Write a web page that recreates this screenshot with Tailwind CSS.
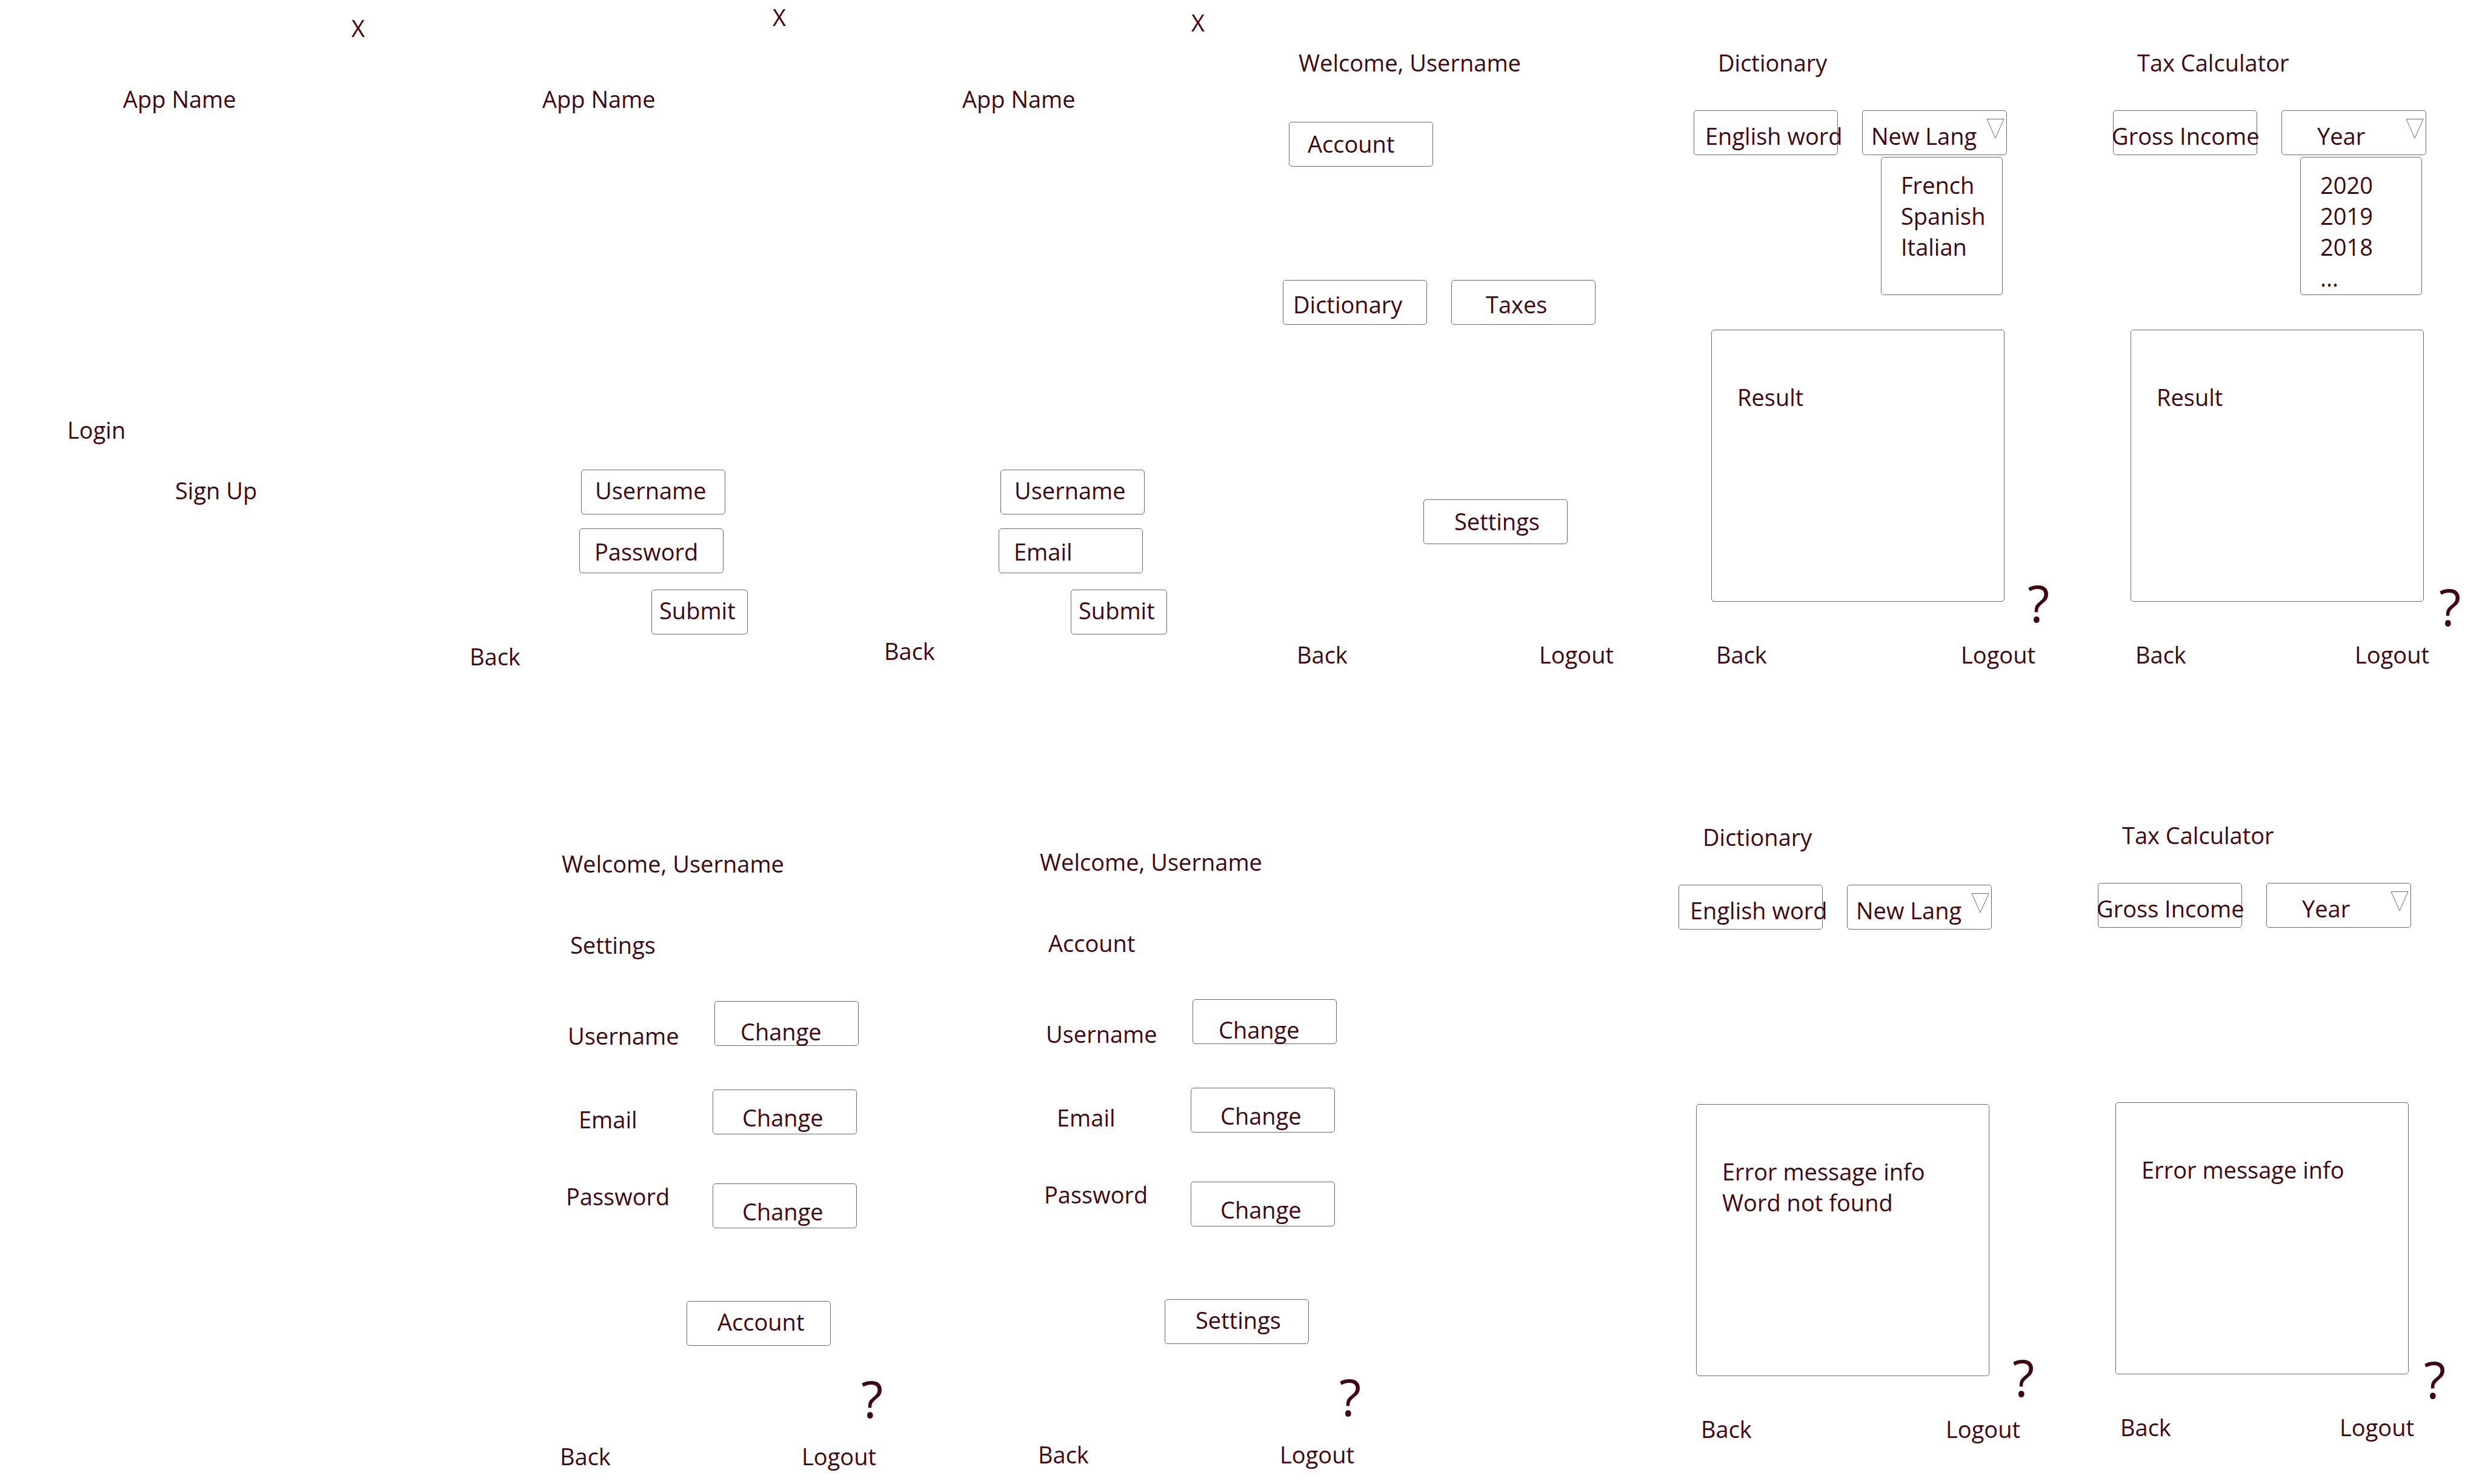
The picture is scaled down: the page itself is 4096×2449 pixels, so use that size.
<!DOCTYPE html>
<html lang="en">
<head>
<meta charset="utf-8">
<title>App wireframes</title>
<script src="https://cdn.jsdelivr.net/npm/@tailwindcss/browser@4"></script>
</head>
<body class="bg-white font-['Open_Sans',sans-serif] text-[38px] leading-[51px] text-[#3f0711]">
<main class="flex flex-col gap-[166px]">

  <div class="grid grid-cols-[692fr_692fr_692fr_692fr_692fr_636fr] items-start">

    <!-- Start screen -->
    <section class="flex flex-col items-start">
      <button class="mt-[21px] ml-[580px]">X</button>
      <h1 class="mt-[66px] ml-[203px]">App Name</h1>
      <a href="#login" class="mt-[495px] ml-[111px]">Login</a>
      <a href="#signup" class="mt-[49px] ml-[289px]">Sign Up</a>
    </section>

    <!-- Login -->
    <section class="flex flex-col items-start">
      <button class="mt-[3px] ml-[583px]">X</button>
      <h1 class="mt-[84px] ml-[203px]">App Name</h1>
      <label class="mt-[586px] ml-[267px] flex h-[74px] w-[238px] items-start rounded-[5px] border border-[#6a6a6a] pt-2 pl-5.5"><input type="text" aria-label="Username" value="Username" class="h-[51px] w-full"></label>
      <label class="mt-[23px] ml-[264px] flex h-[74px] w-[238px] items-start rounded-[5px] border border-[#6a6a6a] pt-3 pl-6"><input type="text" aria-label="Password" value="Password" class="h-[51px] w-full"></label>
      <button class="mt-[27px] ml-[383px] flex h-[74px] w-[159px] items-start rounded-[5px] border border-[#6a6a6a] pt-2 pl-3">Submit</button>
      <a href="#start" class="mt-[11px] ml-[83px]">Back</a>
    </section>

    <!-- Sign up -->
    <section class="flex flex-col items-start">
      <button class="mt-[12px] ml-[582px]">X</button>
      <h1 class="mt-[75px] ml-[204px]">App Name</h1>
      <label class="mt-[586px] ml-[267px] flex h-[74px] w-[238px] items-start rounded-[5px] border border-[#6a6a6a] pt-2 pl-5.5"><input type="text" aria-label="Username" value="Username" class="h-[51px] w-full"></label>
      <label class="mt-[23px] ml-[264px] flex h-[74px] w-[238px] items-start rounded-[5px] border border-[#6a6a6a] pt-3 pl-6"><input type="text" aria-label="Email" value="Email" class="h-[51px] w-full"></label>
      <button class="mt-[27px] ml-[383px] flex h-[74px] w-[159px] items-start rounded-[5px] border border-[#6a6a6a] pt-2 pl-3">Submit</button>
      <a href="#start" class="mt-[2px] ml-[75px]">Back</a>
    </section>

    <!-- Home -->
    <section class="flex flex-col items-start">
      <h1 class="mt-[78px] ml-[67px]">Welcome, Username</h1>
      <button class="mt-[72px] ml-[51px] flex h-[74px] w-[238px] items-start rounded-[5px] border border-[#6a6a6a] pt-2.5 pl-7.5">Account</button>
      <div class="mt-[187px] ml-[41px] flex gap-10">
        <button class="flex h-[74px] w-[238px] items-start rounded-[5px] border border-[#6a6a6a] pt-3.5 pl-4">Dictionary</button>
        <button class="flex h-[74px] w-[238px] items-start rounded-[5px] border border-[#6a6a6a] pt-3.5 pl-14">Taxes</button>
      </div>
      <button class="mt-[288px] ml-[273px] flex h-[74px] w-[238px] items-start rounded-[5px] border border-[#6a6a6a] pt-2.5 pl-12.5">Settings</button>
      <nav class="mt-[157px] ml-[64px] flex w-[523px] justify-between"><a href="#back">Back</a><a href="#logout">Logout</a></nav>
    </section>

    <!-- Dictionary -->
    <section class="flex flex-col items-start">
      <h1 class="mt-[78px] ml-[67px]">Dictionary</h1>
      <div class="mt-[53px] ml-[27px] flex gap-10">
        <label class="flex h-[74px] w-[238px] items-start rounded-[5px] border border-[#6a6a6a] pt-4 pl-4.5"><input type="text" aria-label="English word" value="English word" class="h-[51px] w-[240px] shrink-0"></label>
        <div class="relative h-[74px] w-[239px]">
          <select aria-label="New language" class="h-[74px] w-full appearance-none rounded-[5px] border border-[#6a6a6a] pt-4 pb-[5px] pl-3.5"><option>New Lang</option></select>
          <svg class="pointer-events-none absolute top-3.5 right-1 h-[33px] w-[30px]" viewBox="0 0 30 33" fill="none" stroke="#6a6a6a"><path d="M1 .5H29L15 32Z"/></svg>
        </div>
      </div>
      <ul class="mt-[3px] ml-[336px] h-[228px] w-[201px] rounded-[5px] border border-[#6a6a6a] pt-5 pl-8"><li>French</li><li>Spanish</li><li>Italian</li></ul>
      <div class="mt-[57px] ml-[56px] flex items-end gap-[38px]">
        <output class="block h-[449px] w-[484px] rounded-[5px] border border-[#6a6a6a] pt-[85px] pl-10.5">Result</output>
        <button class="-mb-[44px] text-[84px] leading-[84px]">?</button>
      </div>
      <nav class="mt-[62px] ml-[64px] flex w-[527px] justify-between"><a href="#back">Back</a><a href="#logout">Logout</a></nav>
    </section>

    <!-- Tax calculator -->
    <section class="flex flex-col items-start">
      <h1 class="mt-[78px] ml-[67px]">Tax Calculator</h1>
      <div class="mt-[53px] ml-[27px] flex gap-10">
        <label class="flex h-[74px] w-[238px] items-start rounded-[5px] border border-[#6a6a6a] pt-4"><input type="text" aria-label="Gross income" value="Gross Income" class="-ml-[3px] h-[51px] w-[260px] shrink-0"></label>
        <div class="relative h-[74px] w-[239px]">
          <select aria-label="Year" class="h-[74px] w-full appearance-none rounded-[5px] border border-[#6a6a6a] pt-4 pb-[5px] pl-14.5"><option>Year</option></select>
          <svg class="pointer-events-none absolute top-3.5 right-1 h-[33px] w-[30px]" viewBox="0 0 30 33" fill="none" stroke="#6a6a6a"><path d="M1 .5H29L15 32Z"/></svg>
        </div>
      </div>
      <ul class="mt-[3px] ml-[336px] h-[228px] w-[201px] rounded-[5px] border border-[#6a6a6a] pt-5 pl-8"><li>2020</li><li>2019</li><li>2018</li><li>...</li></ul>
      <div class="mt-[57px] ml-[56px] flex items-end gap-[25px]">
        <output class="block h-[449px] w-[484px] shrink-0 rounded-[5px] border border-[#6a6a6a] pt-[85px] pl-10.5">Result</output>
        <button class="-mb-[50px] text-[84px] leading-[84px]">?</button>
      </div>
      <nav class="mt-[62px] ml-[64px] flex w-[485px] justify-between"><a href="#back">Back</a><a href="#logout">Logout</a></nav>
    </section>
  </div>

  <div class="grid grid-cols-[861fr_789fr_1093fr_692fr_661fr] items-start">

    <!-- Settings -->
    <section class="col-start-2 flex flex-col items-start">
      <h1 class="mt-[125px] ml-[66px]">Welcome, Username</h1>
      <h2 class="mt-[83px] ml-[80px]">Settings</h2>
      <div class="mt-[67px] ml-[76px] flex items-start">
        <span class="mt-8 w-[242px]">Username</span>
        <button class="flex h-[74px] w-[238px] items-start rounded-[5px] border border-[#6a6a6a] pt-6 pl-10.5">Change</button>
      </div>
      <div class="mt-[63px] ml-[94px] flex items-start">
        <span class="mt-6 w-[221px]">Email</span>
        <button class="flex h-[74px] w-[238px] items-start rounded-[5px] border border-[#6a6a6a] pt-5 pl-12">Change</button>
      </div>
      <div class="mt-[80px] ml-[73px] flex items-start">
        <span class="-mt-1 w-[242px]">Password</span>
        <button class="flex h-[74px] w-[238px] items-start rounded-[5px] border border-[#6a6a6a] pt-5 pl-12">Change</button>
      </div>
      <button class="mt-[120px] ml-[272px] flex h-[74px] w-[238px] items-start rounded-[5px] border border-[#6a6a6a] pt-2 pl-12.5">Account</button>
      <button class="mt-[45px] ml-[560px] text-[84px] leading-[84px]">?</button>
      <nav class="mt-[28px] ml-[63px] flex w-[522px] justify-between"><a href="#back">Back</a><a href="#logout">Logout</a></nav>
    </section>

    <!-- Account -->
    <section class="flex flex-col items-start">
      <h1 class="mt-[122px] ml-[66px]">Welcome, Username</h1>
      <h2 class="mt-[83px] ml-[80px]">Account</h2>
      <div class="mt-[67px] ml-[76px] flex items-start">
        <span class="mt-8 w-[242px]">Username</span>
        <button class="flex h-[74px] w-[238px] items-start rounded-[5px] border border-[#6a6a6a] pt-6 pl-10.5">Change</button>
      </div>
      <div class="mt-[63px] ml-[94px] flex items-start">
        <span class="mt-6 w-[221px]">Email</span>
        <button class="flex h-[74px] w-[238px] items-start rounded-[5px] border border-[#6a6a6a] pt-5 pl-12">Change</button>
      </div>
      <div class="mt-[80px] ml-[73px] flex items-start">
        <span class="-mt-1 w-[242px]">Password</span>
        <button class="flex h-[74px] w-[238px] items-start rounded-[5px] border border-[#6a6a6a] pt-5 pl-12">Change</button>
      </div>
      <button class="mt-[120px] ml-[272px] flex h-[74px] w-[238px] items-start rounded-[5px] border border-[#6a6a6a] pt-2 pl-12.5">Settings</button>
      <button class="mt-[45px] ml-[560px] text-[84px] leading-[84px]">?</button>
      <nav class="mt-[28px] ml-[63px] flex w-[522px] justify-between"><a href="#back">Back</a><a href="#logout">Logout</a></nav>
    </section>

    <!-- Dictionary error -->
    <section class="flex flex-col items-start">
      <h1 class="mt-[81px] ml-[67px]">Dictionary</h1>
      <div class="mt-[53px] ml-[27px] flex gap-10">
        <label class="flex h-[74px] w-[238px] items-start rounded-[5px] border border-[#6a6a6a] pt-4 pl-4.5"><input type="text" aria-label="English word" value="English word" class="h-[51px] w-[240px] shrink-0"></label>
        <div class="relative h-[74px] w-[239px]">
          <select aria-label="New language" class="h-[74px] w-full appearance-none rounded-[5px] border border-[#6a6a6a] pt-4 pb-[5px] pl-3.5"><option>New Lang</option></select>
          <svg class="pointer-events-none absolute top-3.5 right-1 h-[33px] w-[30px]" viewBox="0 0 30 33" fill="none" stroke="#6a6a6a"><path d="M1 .5H29L15 32Z"/></svg>
        </div>
      </div>
      <div class="mt-[288px] ml-[56px] flex items-end gap-[38px]">
        <output class="block h-[449px] w-[484px] rounded-[5px] border border-[#6a6a6a] pt-[85px] pl-10.5">Error message info<br>Word not found</output>
        <button class="-mb-[44px] text-[84px] leading-[84px]">?</button>
      </div>
      <nav class="mt-[62px] ml-[64px] flex w-[527px] justify-between"><a href="#back">Back</a><a href="#logout">Logout</a></nav>
    </section>

    <!-- Tax calculator error -->
    <section class="flex flex-col items-start">
      <h1 class="mt-[78px] ml-[67px]">Tax Calculator</h1>
      <div class="mt-[53px] ml-[27px] flex gap-10">
        <label class="flex h-[74px] w-[238px] items-start rounded-[5px] border border-[#6a6a6a] pt-4"><input type="text" aria-label="Gross income" value="Gross Income" class="-ml-[3px] h-[51px] w-[260px] shrink-0"></label>
        <div class="relative h-[74px] w-[239px]">
          <select aria-label="Year" class="h-[74px] w-full appearance-none rounded-[5px] border border-[#6a6a6a] pt-4 pb-[5px] pl-14.5"><option>Year</option></select>
          <svg class="pointer-events-none absolute top-3.5 right-1 h-[33px] w-[30px]" viewBox="0 0 30 33" fill="none" stroke="#6a6a6a"><path d="M1 .5H29L15 32Z"/></svg>
        </div>
      </div>
      <div class="mt-[288px] ml-[56px] flex items-end gap-[25px]">
        <output class="block h-[449px] w-[484px] shrink-0 rounded-[5px] border border-[#6a6a6a] pt-[85px] pl-10.5">Error message info</output>
        <button class="-mb-[50px] text-[84px] leading-[84px]">?</button>
      </div>
      <nav class="mt-[62px] ml-[64px] flex w-[485px] justify-between"><a href="#back">Back</a><a href="#logout">Logout</a></nav>
    </section>
  </div>
</main>
</body>
</html>
